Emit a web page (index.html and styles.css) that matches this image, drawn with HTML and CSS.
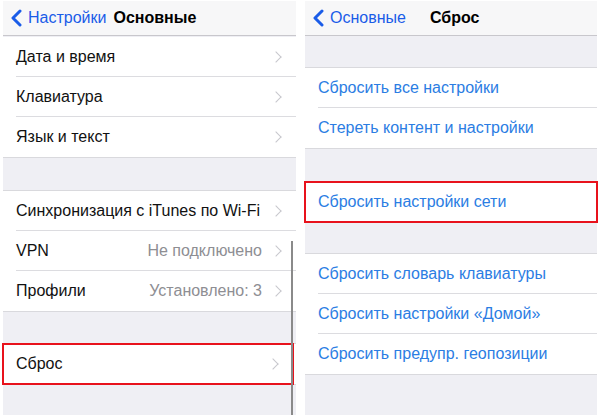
FILE: index.html
```html
<!DOCTYPE html>
<html lang="ru">
<head>
    <meta charset="UTF-8">
    <title>Сброс</title>
    <link rel="stylesheet" href="styles.css">
</head>
<body>
    <div class="screens">
        <!-- левый экран: Основные -->
        <div class="screen screen-left">
            <div class="nav">
                <span class="back">
                    <svg width="11" height="18" viewBox="0 0 11 18"><polyline points="9,2 2,9 9,16" fill="none" stroke="#1a5ce8" stroke-width="3" stroke-linecap="round" stroke-linejoin="round"/></svg>
                    Настройки
                </span>
                <span class="title">Основные</span>
            </div>
            <ul class="group group-first">
                <li class="row"><span class="label">Дата и время</span><i class="chev"></i></li>
                <li class="row"><span class="label">Клавиатура</span><i class="chev"></i></li>
                <li class="row"><span class="label">Язык и текст</span><i class="chev"></i></li>
            </ul>
            <ul class="group">
                <li class="row"><span class="label">Синхронизация с iTunes по Wi-Fi</span><i class="chev"></i></li>
                <li class="row"><span class="label">VPN</span><span class="value">Не подключено</span><i class="chev"></i></li>
                <li class="row"><span class="label">Профили</span><span class="value">Установлено: 3</span><i class="chev"></i></li>
            </ul>
            <ul class="group group-last">
                <li class="row marked"><span class="label">Сброс</span><i class="chev"></i></li>
            </ul>
            <div class="scrollbar"></div>
        </div>

        <!-- правый экран: Сброс -->
        <div class="screen screen-right">
            <div class="nav">
                <span class="back">
                    <svg width="11" height="18" viewBox="0 0 11 18"><polyline points="9,2 2,9 9,16" fill="none" stroke="#1a5ce8" stroke-width="3" stroke-linecap="round" stroke-linejoin="round"/></svg>
                    Основные
                </span>
                <span class="title title-wide">Сброс</span>
            </div>
            <ul class="group group-top">
                <li class="row action"><span class="label">Сбросить все настройки</span></li>
                <li class="row action"><span class="label">Стереть контент и настройки</span></li>
            </ul>
            <ul class="group">
                <li class="row action marked"><span class="label">Сбросить настройки сети</span></li>
            </ul>
            <ul class="group group-tight">
                <li class="row action"><span class="label">Сбросить словарь клавиатуры</span></li>
                <li class="row action"><span class="label">Сбросить настройки «Домой»</span></li>
                <li class="row action"><span class="label">Сбросить предупр. геопозиции</span></li>
            </ul>
        </div>
    </div>
</body>
</html>
```

FILE: styles.css
```css
*{
    margin: 0;
    padding: 0;
    box-sizing: border-box;
}
li{
    list-style: none;
}
body{
    background: #fff;
    font-family: "Liberation Sans", Arial, sans-serif;
    font-size: 16px;
    color: #111;
}
.screens{
    display: flex;
    gap: 9px;
    padding: 1px 3px 0 3px;
}
.screen{
    height: 414px;
    background: #efeff4;
    position: relative;
}
.screen-left{
    width: 293px;
}
.screen-right{
    width: 292px;
}
.nav{
    height: 35px;
    background: #f7f7f8;
    border-bottom: 1px solid #c8c7cc;
    display: flex;
    align-items: center;
    padding-left: 8px;
}
.back{
    display: flex;
    align-items: center;
    gap: 6px;
    color: #1a5ce8;
}
.title{
    font-weight: bold;
    color: #000;
    margin-left: 7px;
}
.title-wide{
    margin-left: 24px;
}
.group{
    background: #fff;
    border-top: 1px solid #d9d9dd;
    border-bottom: 1px solid #d9d9dd;
    margin-top: 32px;
}
.group-first{
    margin-top: 1px;
    border-top: none;
}
.group-top{
    margin-top: 31px;
}
.group-tight{
    margin-top: 30px;
}
.group-last{
    margin-top: 31px;
}
.row{
    height: 40px;
    display: flex;
    align-items: center;
    padding: 0 12px 0 13px;
    position: relative;
}
.row + .row::before{
    content: "";
    position: absolute;
    top: -1px;
    left: 13px;
    right: 0;
    border-top: 1px solid #dcdce0;
}
.label{
    flex: 1;
    white-space: nowrap;
}
.value{
    color: #8e8e93;
    margin-right: 10px;
}
.chev{
    width: 8px;
    height: 8px;
    border-top: 1.5px solid #c7c7cc;
    border-right: 1.5px solid #c7c7cc;
    transform: rotate(45deg);
    margin-right: 4px;
}
.action{
    color: #2b7de3;
}
.marked{
    outline: 2px solid #e8121c;
    outline-offset: -1px;
}
.screen-left .marked{
    margin-right: 3px;
}
.scrollbar{
    position: absolute;
    right: 3px;
    top: 240px;
    bottom: 0;
    width: 2px;
    background: #8a8a8a;
}
```
